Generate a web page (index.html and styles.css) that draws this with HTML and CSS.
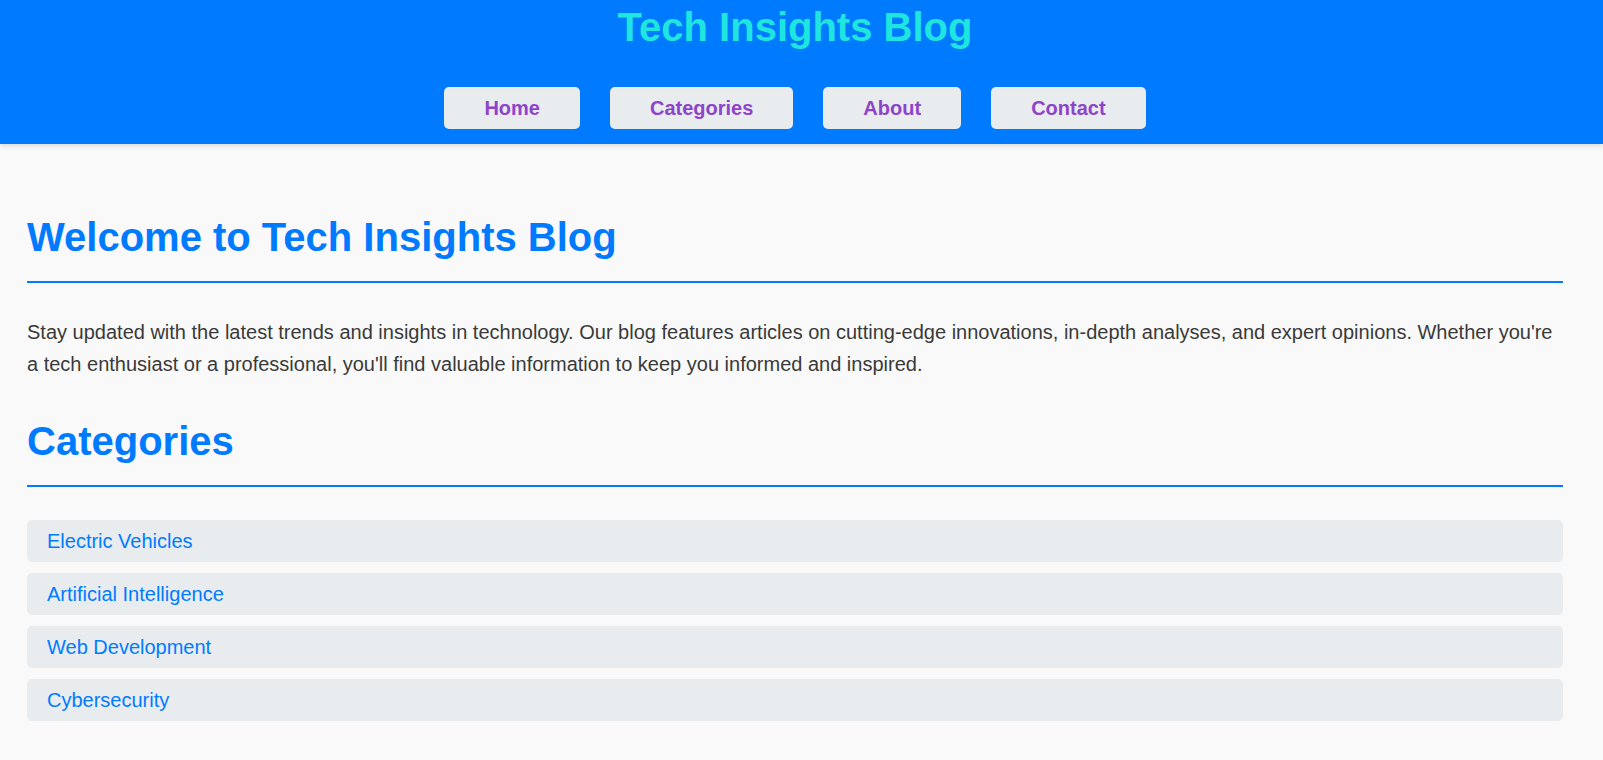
FILE: index.html
```html
<!DOCTYPE html>
<html lang="en">
<head>
<meta charset="utf-8">
<title>Tech Insights Blog</title>
<link rel="stylesheet" href="styles.css">
</head>
<body>
<header class="site-header">
  <h1 class="site-title">Tech Insights Blog</h1>
  <nav>
    <ul class="nav-list">
      <li><a class="nav-btn" href="#">Home</a></li>
      <li><a class="nav-btn" href="#">Categories</a></li>
      <li><a class="nav-btn" href="#">About</a></li>
      <li><a class="nav-btn" href="#">Contact</a></li>
    </ul>
  </nav>
</header>
<main class="content">
  <section>
    <h2 class="section-title">Welcome to Tech Insights Blog</h2>
    <p class="intro">Stay updated with the latest trends and insights in technology. Our blog features articles on cutting-edge innovations, in-depth analyses, and expert opinions. Whether you're a tech enthusiast or a professional, you'll find valuable information to keep you informed and inspired.</p>
  </section>
  <section>
    <h2 class="section-title">Categories</h2>
    <ul class="cat-list">
      <li class="cat-item"><a href="#">Electric Vehicles</a></li>
      <li class="cat-item"><a href="#">Artificial Intelligence</a></li>
      <li class="cat-item"><a href="#">Web Development</a></li>
      <li class="cat-item"><a href="#">Cybersecurity</a></li>
    </ul>
  </section>
</main>
</body>
</html>
```
FILE: styles.css
```css
* { box-sizing: border-box; }
html, body { margin: 0; padding: 0; }
body {
  font-family: "Liberation Sans", Arial, sans-serif;
  background: #f9f9f9;
  color: #333;
}
.site-header {
  background: #007bff;
  padding: 4px 13px 15px 0;
  box-shadow: 0 2px 5px rgba(0, 0, 0, 0.12);
  text-align: center;
}
.site-title {
  margin: 0 0 37px;
  font-size: 40px;
  line-height: 46px;
  font-weight: bold;
  color: #1ee5e0;
}
.nav-list {
  list-style: none;
  margin: 0;
  padding: 0;
  display: flex;
  justify-content: center;
  gap: 30px;
}
.nav-btn {
  display: block;
  padding: 10px 40px;
  font-size: 20px;
  line-height: 22px;
  font-weight: bold;
  color: #8e44c8;
  background: #e9ecef;
  border-radius: 5px;
  text-decoration: none;
}
.content {
  padding: 32px 40px 0 27px;
}
.section-title {
  margin: 38px 0 33px;
  padding-bottom: 21px;
  font-size: 40px;
  line-height: 46px;
  color: #007bff;
  border-bottom: 2px solid #007bff;
}
.intro {
  margin: 0;
  font-size: 20px;
  line-height: 32px;
  color: #3a3a3a;
}
.cat-list {
  list-style: none;
  margin: 0;
  padding: 0;
}
.cat-item {
  background: #e9ecef;
  border-radius: 5px;
  padding: 10px 20px;
  margin-bottom: 11px;
  font-size: 20px;
  line-height: 22px;
}
.cat-item a {
  color: #007bff;
  text-decoration: none;
}
```
